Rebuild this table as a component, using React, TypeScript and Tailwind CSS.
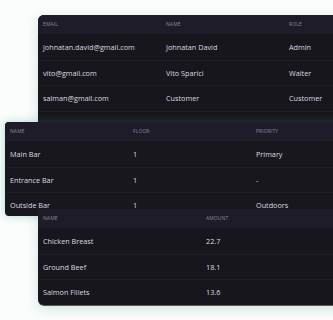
import React from "react";

const font = { fontFamily: '"Open Sans", "Noto Sans", sans-serif' };

function Table({
  headers,
  rows,
  cols,
}: {
  headers: string[];
  rows: string[][];
  cols: string;
}) {
  return (
    <div className="flex flex-col">
      <div
        className={`grid ${cols} h-[19px] items-center bg-[#1f1c29] pl-[5px] text-[5px] uppercase tracking-[0.02em] text-[#8a8797]`}
      >
        {headers.map((h) => (
          <div key={h}>{h}</div>
        ))}
      </div>
      {rows.map((r, i) => (
        <div
          key={i}
          className={`grid ${cols} h-[25.5px] items-center ${i > 0 ? "border-t border-[#1f1e25]" : ""} pl-[5px] text-[7.25px] leading-[10px] text-[#dcdbe1]`}
        >
          {r.map((c, j) => (
            <div key={j} className="whitespace-nowrap">
              {c}
            </div>
          ))}
        </div>
      ))}
    </div>
  );
}

export default function App() {
  return (
    <div
      className="relative h-[320px] w-[333px] overflow-hidden bg-[#fbfdfc]"
      style={font}
    >
      {/* back card */}
      <div className="absolute left-[38px] top-[15px] h-[290px] w-[320px] overflow-hidden rounded-[6px] bg-[#17161c] shadow-[inset_0_1px_0_#3a3840,0_4px_14px_rgba(80,160,140,0.25)]">
        <Table
          cols="grid-cols-[123px_123px_123px]"
          headers={["Email", "Name", "Role"]}
          rows={[
            ["johnatan.david@gmail.com", "Johnatan David", "Admin"],
            ["vito@gmail.com", "Vito Sparici", "Waiter"],
            ["salman@gmail.com", "Customer", "Customer"],
            ["fatin.khan@gmail.com", "Fatin Khan", "Admin"],
          ]}
        />
      </div>

      {/* middle card */}
      <div className="absolute left-[5px] top-[122px] h-[94px] w-[340px] overflow-hidden rounded-[4px] bg-[#18171d] shadow-[0_0_10px_rgba(40,150,130,0.35)]">
        <Table
          cols="grid-cols-[123px_123px_123px]"
          headers={["Name", "Floor", "Priority"]}
          rows={[
            ["Main Bar", "1", "Primary"],
            ["Entrance Bar", "1", "-"],
            ["Outside Bar", "1", "Outdoors"],
          ]}
        />
      </div>

      {/* bottom card */}
      <div className="absolute left-[38px] top-[209px] h-[95.5px] w-[320px] overflow-hidden rounded-bl-[6px] bg-[#17161c] shadow-[0_1px_0_#5a5860]">
        <Table
          cols="grid-cols-[163px_163px]"
          headers={["Name", "Amount"]}
          rows={[
            ["Chicken Breast", "22.7"],
            ["Ground Beef", "18.1"],
            ["Salmon Fillets", "13.6"],
          ]}
        />
      </div>
    </div>
  );
}
